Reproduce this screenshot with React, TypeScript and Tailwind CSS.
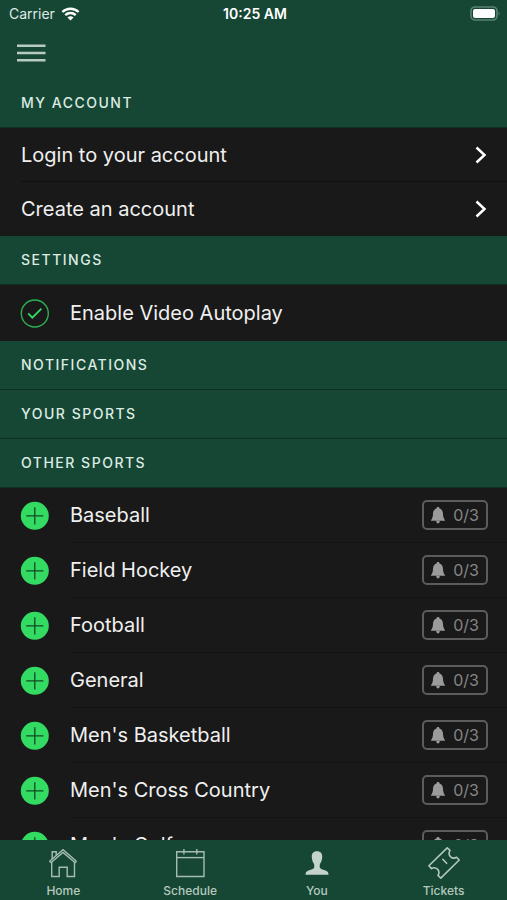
import type { ReactNode } from "react";

const SPORTS = [
  "Baseball",
  "Field Hockey",
  "Football",
  "General",
  "Men's Basketball",
  "Men's Cross Country",
  "Men's Golf",
];

function StatusBar() {
  return (
    <div className="grid h-7 grid-cols-3 items-center pr-1.5 pl-[9px] text-sm text-[#dfe9e4]">
      <div className="flex items-center gap-1.5">
        <span>Carrier</span>
        <svg width="19" height="14" viewBox="0 0 18 14" fill="none" stroke="#fff" strokeWidth="2.4" aria-hidden="true">
          <path d="M0.9 5 A11.6 11.6 0 0 1 17.1 5" />
          <path d="M3.8 8.1 A7.4 7.4 0 0 1 14.2 8.1" />
          <path d="M9 13.6 L6 10.6 A4.3 4.3 0 0 1 12 10.6 Z" fill="#fff" stroke="none" />
        </svg>
      </div>
      <div className="text-center font-semibold whitespace-nowrap text-white">10:25 AM</div>
      <div className="flex justify-end">
        <svg width="31" height="16" viewBox="0 0 31 16" aria-hidden="true">
          <rect x="1" y="1" width="26" height="13" rx="4" fill="none" stroke="#5c8472" strokeWidth="1.6" />
          <rect x="3" y="3" width="22" height="9" rx="2" fill="#fff" />
          <path d="M28.6 5.4 Q30.6 7.5 28.6 9.6 Z" fill="#5c8472" />
        </svg>
      </div>
    </div>
  );
}

function SectionTitle({ children }: { children: ReactNode }) {
  return (
    <h2 className="flex h-[49px] items-center border-b border-[#10301f] bg-[#164734] px-[21px] text-sm font-medium tracking-[1.5px] text-[#dcebe3]">
      {children}
    </h2>
  );
}

function AccountLink({ label }: { label: string }) {
  return (
    <li className="group pl-[21px]">
      <a
        href="#account"
        className="flex h-[54px] items-center justify-between border-b border-[#101010] pr-5 group-last:border-transparent"
      >
        <span>{label}</span>
        <svg width="12" height="18" viewBox="0 0 12 18" fill="none" stroke="#fff" strokeWidth="2.5" aria-hidden="true">
          <path d="M1.5 1.5 L9.5 9 L1.5 16.5" />
        </svg>
      </a>
    </li>
  );
}

function SportRow({ name }: { name: string }) {
  return (
    <li className="flex h-[55px] pl-5">
      <button type="button" aria-label={`Add ${name}`} className="mr-[21px] flex w-[29px] shrink-0 items-center">
        <svg width="29" height="29" viewBox="0 0 29 29" aria-hidden="true">
          <circle cx="14.8" cy="14.8" r="14" fill="#33db63" />
          <path d="M14.8 6.2 V23.4 M6.2 14.8 H23.4" stroke="#124a24" strokeWidth="1.3" />
        </svg>
      </button>
      <div className="flex flex-1 items-center justify-between border-b border-[#131313] pr-[19px]">
        <span>{name}</span>
        <button
          type="button"
          aria-label={`${name} alerts 0/3`}
          className="flex h-[30px] w-[66px] items-center justify-center gap-2 rounded-[5px] border-2 border-[#5c5c5c] text-base text-[#858585]"
        >
          <svg width="14" height="17" viewBox="0 0 14 17" fill="#9b9b9b" aria-hidden="true">
            <path d="M7 0 C8 0 8.5 0.6 8.5 1.4 C10.9 2 11.9 4 12 6.8 C12.1 9.8 12.5 11.3 14 13.2 V13.8 H0 V13.2 C1.5 11.3 1.9 9.8 2 6.8 C2.1 4 3.1 2 5.5 1.4 C5.5 0.6 6 0 7 0 Z" />
            <path d="M5.2 13.8 H8.8 C8.7 15.8 8 16.5 7 16.5 S5.3 15.8 5.2 13.8 Z" />
          </svg>
          <span>0/3</span>
        </button>
      </div>
    </li>
  );
}

const line = { fill: "none", stroke: "#a5bdb1", strokeWidth: 1.4 };

const TABS: { label: string; icon: ReactNode }[] = [
  {
    label: "Home",
    icon: (
      <g {...line}>
        <path d="M2.6 14.2 L16 2.6 L29.4 14.2" />
        <path d="M3.8 15.8 L16 5.4 L28.2 15.8" />
        <path d="M2.6 14.2 L3.8 15.8 M29.4 14.2 L28.2 15.8" />
        <path d="M4.7 15 V29.5 H12.2 V20.3 H20.2 V29.5 H27.5 V15" />
        <path d="M5.2 12 V4.8 H9.2 V8.2" />
      </g>
    ),
  },
  {
    label: "Schedule",
    icon: (
      <g {...line}>
        <path d="M2.7 4.7 H30 V29.5 H2.7 Z" />
        <path d="M2.7 10.6 H30" />
        <path d="M9.9 2 V7.6 M22.8 2 V7.6" />
      </g>
    ),
  },
  {
    label: "You",
    icon: (
      <path
        fill="#c4d4cc"
        d="M16 4.2 C19.8 4.2 21.4 6.6 21.2 10 C21 13.4 20.1 15.4 18.9 17 C18.6 18.4 18.6 19.6 18.9 20.7 C19.8 22.3 22.6 22.7 25 23.7 C26.9 24.6 27.5 25.6 27.5 27.8 H4.5 C4.5 25.6 5.1 24.6 7 23.7 C9.4 22.7 12.2 22.3 13.1 20.7 C13.4 19.6 13.4 18.4 13.1 17 C11.9 15.4 11 13.4 10.8 10 C10.6 6.6 12.2 4.2 16 4.2 Z"
      />
    ),
  },
  {
    label: "Tickets",
    icon: (
      <g fill="none" stroke="#b3c8bd" strokeWidth="1.6" strokeLinejoin="round" strokeLinecap="round">
        <path d="M19.2 0.9 L22 3.4 C20.7 5.7 20.8 8 22.6 9.8 C24.4 11.4 26.4 11.6 28.6 10.3 L31.2 13 L12.8 31.1 L10 28.5 C11.3 26.2 11.2 23.9 9.4 22.2 C7.6 20.5 5.6 20.4 3.5 21.6 L0.9 18.8 Z" />
        <path d="M14.8 12.3 L18.6 16.3" />
      </g>
    ),
  },
];

export default function App() {
  return (
    <div className="flex h-screen flex-col bg-[#191919] font-['Inter','Liberation_Sans',sans-serif] text-xl text-[#f0f0f0]">
      <header className="shrink-0 bg-[#164734]">
        <StatusBar />
        <div className="flex h-[50px] items-center px-4">
          <button type="button" aria-label="Menu">
            <svg width="30" height="20" viewBox="0 0 30 20" stroke="#b9cac1" strokeWidth="2.4" aria-hidden="true">
              <path d="M1 2.8 H29.5 M1 10 H29.5 M1 17.2 H29.5" />
            </svg>
          </button>
        </div>
      </header>

      <main className="min-h-0 flex-1 overflow-y-auto bg-[linear-gradient(#164734_1px,transparent_1px)] pt-px [scrollbar-width:none]">
        <SectionTitle>MY ACCOUNT</SectionTitle>
        <ul>
          <AccountLink label="Login to your account" />
          <AccountLink label="Create an account" />
        </ul>

        <SectionTitle>SETTINGS</SectionTitle>
        <label className="flex h-14 items-center gap-[21px] px-5">
          <span className="grid shrink-0">
            <input
              type="checkbox"
              defaultChecked
              className="peer col-start-1 row-start-1 size-[29px] appearance-none rounded-full"
            />
            <svg
              className="pointer-events-none col-start-1 row-start-1 text-transparent peer-checked:text-[#33db63]"
              width="29"
              height="29"
              viewBox="0 0 29 29"
              fill="none"
              aria-hidden="true"
            >
              <circle cx="14.8" cy="14.5" r="13.5" stroke="#2bb352" strokeWidth="1.4" />
              <path d="M8.2 14.4 L12.3 18.6 L21.4 9.6" stroke="currentColor" strokeWidth="1.8" />
            </svg>
          </span>
          <span>Enable Video Autoplay</span>
        </label>

        <SectionTitle>NOTIFICATIONS</SectionTitle>
        <SectionTitle>YOUR SPORTS</SectionTitle>
        <SectionTitle>OTHER SPORTS</SectionTitle>
        <ul>
          {SPORTS.map((name) => (
            <SportRow key={name} name={name} />
          ))}
        </ul>
      </main>

      <nav className="grid h-[60px] shrink-0 grid-cols-4 bg-[#164734] pt-[7px] text-xs font-medium text-[#b5c9bf]">
        {TABS.map(({ label, icon }) => (
          <a key={label} href={`#${label.toLowerCase()}`} className="flex flex-col items-center gap-1">
            <svg width="32" height="32" viewBox="0 0 32 32" aria-hidden="true">
              {icon}
            </svg>
            <span>{label}</span>
          </a>
        ))}
      </nav>
    </div>
  );
}
